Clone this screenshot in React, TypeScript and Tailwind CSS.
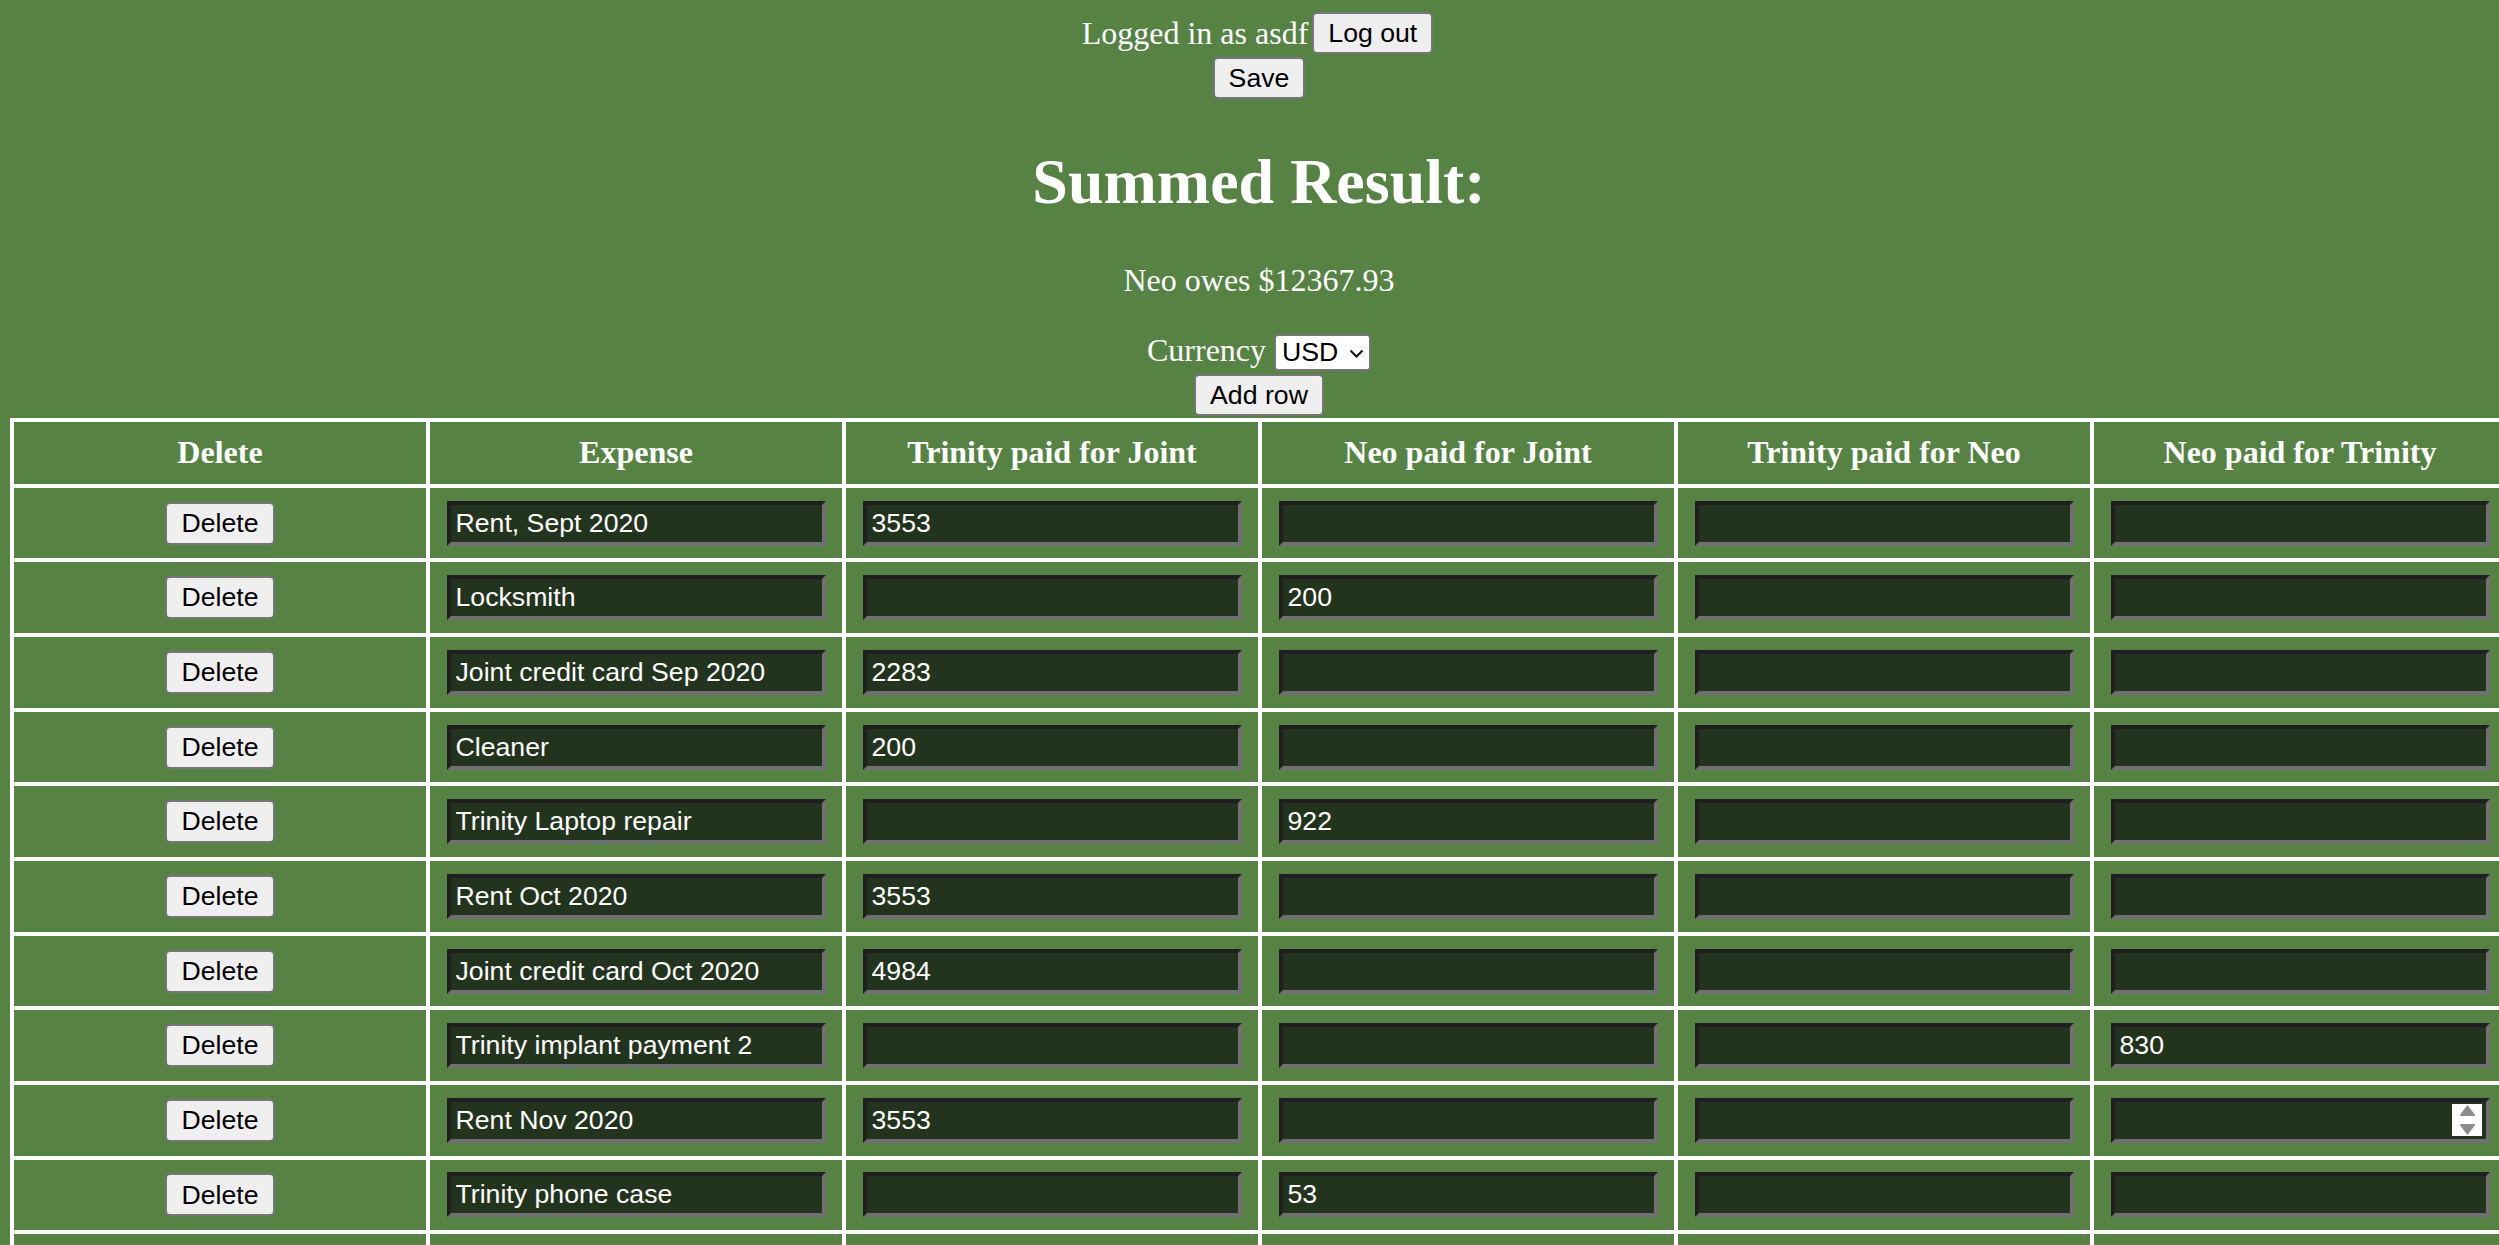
import React from "react";

const rows: string[][] = [
  ["Rent, Sept 2020", "3553", "", "", ""],
  ["Locksmith", "", "200", "", ""],
  ["Joint credit card Sep 2020", "2283", "", "", ""],
  ["Cleaner", "200", "", "", ""],
  ["Trinity Laptop repair", "", "922", "", ""],
  ["Rent Oct 2020", "3553", "", "", ""],
  ["Joint credit card Oct 2020", "4984", "", "", ""],
  ["Trinity implant payment 2", "", "", "", "830"],
  ["Rent Nov 2020", "3553", "", "", ""],
  ["Trinity phone case", "", "53", "", ""],
];

const headers = [
  "Delete",
  "Expense",
  "Trinity paid for Joint",
  "Neo paid for Joint",
  "Trinity paid for Neo",
  "Neo paid for Trinity",
];

function Btn({ label, tall }: { label: string; tall?: boolean }) {
  return (
    <button
      type="button"
      className={
        (tall ? "h-[43px] " : "h-[42px] ") +
        "px-[14px] border-2 border-[#767676] rounded-[5px] bg-[#efefef] text-black text-[26.67px] leading-none font-['Liberation_Sans',Arial,sans-serif] flex items-center justify-center"
      }
    >
      {label}
    </button>
  );
}

function Spinner() {
  return (
    <div className="absolute right-[8px] top-[6px] w-[30px] h-[32px] bg-white">
      <svg width="30" height="32" viewBox="0 0 30 32">
        <path
          d="M15.5 2.5 L22 11 L9 11 Z"
          fill="#8c8c8c"
          stroke="#8c8c8c"
          strokeWidth="2"
          strokeLinejoin="round"
        />
        <path
          d="M9 21 L22 21 L15.5 29.5 Z"
          fill="#8c8c8c"
          stroke="#8c8c8c"
          strokeWidth="2"
          strokeLinejoin="round"
        />
      </svg>
    </div>
  );
}

function Field({ value, spinner }: { value: string; spinner?: boolean }) {
  return (
    <div className="relative w-[379px] h-[45px]">
      <input
        type="text"
        defaultValue={value}
        className="w-full h-full bg-[#23341e] text-white border-4 border-t-[#1f1f1f] border-l-[#1f1f1f] border-b-[#707070] border-r-[#707070] px-[5px] text-[26.67px] font-['Liberation_Sans',Arial,sans-serif] outline-none"
      />
      {spinner ? <Spinner /> : null}
    </div>
  );
}

export default function App() {
  return (
    <div className="w-screen h-screen overflow-hidden bg-[#568344] text-white font-['Liberation_Serif','Times_New_Roman',serif]">
      <div className="w-[2518px] pt-[12px] flex flex-col items-center">
        <div className="flex items-center justify-center h-[42px] gap-[4px] pr-[3px]">
          <span className="text-[32px] leading-[37px]">Logged in as asdf</span>
          <Btn label="Log out" />
        </div>
        <div className="mt-[3px]">
          <Btn label="Save" />
        </div>
        <h1 className="mt-[46px] text-[64px] leading-[74px] font-bold">Summed Result:</h1>
        <p className="mt-[43px] text-[32px] leading-[37px]">Neo owes $12367.93</p>
        <div className="mt-[33px] flex items-baseline justify-center gap-[8px]">
          <span className="text-[32px] leading-[37px]">Currency</span>
          <span className="relative inline-block">
            <select
              defaultValue="USD"
              className="appearance-none w-[97px] h-[37px] bg-white text-black border-2 border-[#767676] rounded-[4px] pl-[6px] text-[26.67px] leading-none font-['Liberation_Sans',Arial,sans-serif] outline-none"
            >
              <option value="USD">USD</option>
              <option value="EUR">EUR</option>
            </select>
            <svg
              className="absolute right-[7px] top-[15px] pointer-events-none"
              width="15"
              height="9"
              viewBox="0 0 15 9"
            >
              <polyline
                points="1.5,1.5 7.5,7.5 13.5,1.5"
                fill="none"
                stroke="#111"
                strokeWidth="2"
              />
            </svg>
          </span>
        </div>
        <div className="mt-[3px]">
          <Btn label="Add row" />
        </div>
        <div className="mt-[2px] self-start ml-[10px] w-[2500px] grid grid-cols-[repeat(6,412px)] grid-rows-[62px_repeat(11,70.65px)] gap-[4px] p-[4px] bg-white">
          {headers.map((h) => (
            <div
              key={h}
              className="bg-[#568344] flex items-center justify-center text-[32px] leading-[37px] font-bold"
            >
              {h}
            </div>
          ))}
          {rows.map((r, i) => (
            <React.Fragment key={i}>
              <div className="bg-[#568344] flex items-center justify-center">
                <Btn label="Delete" tall />
              </div>
              {r.map((v, j) => (
                <div key={j} className="bg-[#568344] flex items-center justify-center">
                  <Field value={v} spinner={i === 8 && j === 4} />
                </div>
              ))}
            </React.Fragment>
          ))}
          {headers.map((h) => (
            <div key={"empty-" + h} className="bg-[#568344]" />
          ))}
        </div>
      </div>
    </div>
  );
}
